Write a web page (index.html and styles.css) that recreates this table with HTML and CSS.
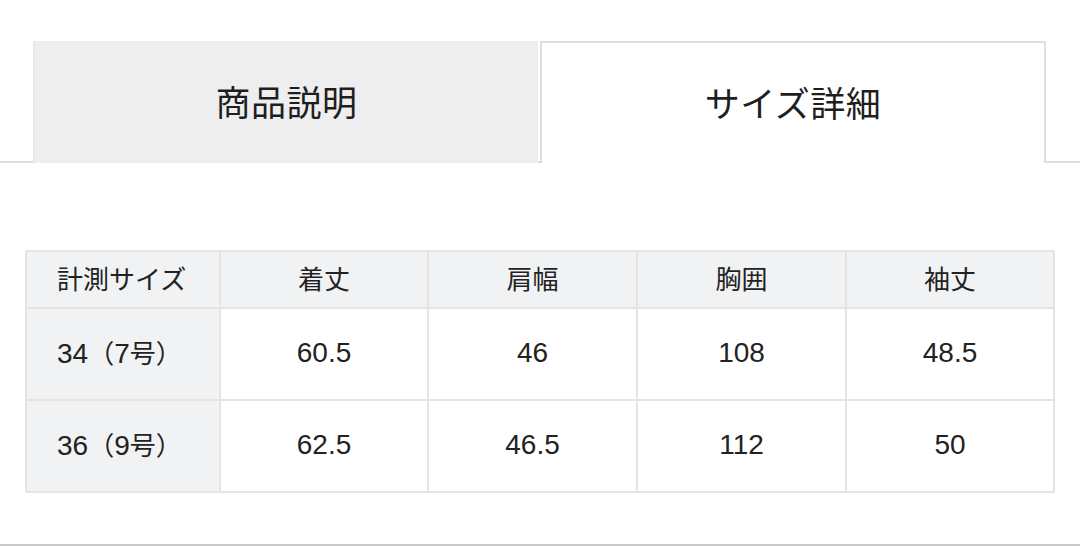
FILE: index.html
```html
<!DOCTYPE html>
<html lang="ja">
<head>
<meta charset="utf-8">
<title>サイズ詳細</title>
<link rel="stylesheet" href="styles.css">
</head>
<body>
<div class="page">
  <div class="tabs">
    <div class="tab">商品説明</div>
    <div class="tab tab-active">サイズ詳細</div>
  </div>
  <div class="table-wrap">
    <table class="size-table">
      <colgroup>
        <col class="c1">
        <col class="c2">
        <col class="c3">
        <col class="c4">
        <col class="c5">
      </colgroup>
      <thead>
        <tr class="head-row">
          <th class="label">計測サイズ</th>
          <th>着丈</th>
          <th>肩幅</th>
          <th>胸囲</th>
          <th>袖丈</th>
        </tr>
      </thead>
      <tbody>
        <tr class="data-row">
          <th class="label"><span class="num">34</span>（<span class="num">7</span>号）</th>
          <td>60.5</td>
          <td>46</td>
          <td>108</td>
          <td>48.5</td>
        </tr>
        <tr class="data-row">
          <th class="label"><span class="num">36</span>（<span class="num">9</span>号）</th>
          <td>62.5</td>
          <td>46.5</td>
          <td>112</td>
          <td>50</td>
        </tr>
      </tbody>
    </table>
  </div>
  <div class="rule"></div>
</div>
</body>
</html>
```

FILE: styles.css
```css
* { box-sizing: border-box; }
html, body {
  margin: 0;
  padding: 0;
  background: #ffffff;
}
body {
  font-family: "Noto Sans CJK JP", "Noto Sans", sans-serif;
  color: #222222;
  width: 1080px;
  height: 546px;
  overflow: hidden;
}
.page {
  padding-top: 41px;
}
.tabs {
  display: flex;
  gap: 2px;
  padding: 0 34px 0 33px;
  border-bottom: 2px solid #dedede;
  height: 122px;
}
.tab {
  flex: 0 0 505px;
  height: 122px;
  margin-bottom: -2px;
  padding-bottom: 4px;
  background: #eeeeee;
  border-left: 2px solid #e8e8e8;
  display: flex;
  align-items: center;
  justify-content: center;
  font-size: 35px;
  color: #1e1e1e;
  letter-spacing: 0.5px;
}
.tab-active {
  flex: 0 0 506px;
  background: #ffffff;
  border: 2px solid #dedede;
  border-bottom: none;
}
.table-wrap {
  padding: 87px 25px 0 25px;
}
.size-table {
  width: 1028px;
  table-layout: fixed;
  border-collapse: collapse;
  border: 2px solid #e4e4e4;
  font-size: 26px;
}
.c1 { width: 194px; }
.c2 { width: 208px; }
.c3 { width: 209px; }
.c4 { width: 209px; }
.c5 { width: 208px; }
.size-table th,
.size-table td {
  border: 2px solid #e4e4e4;
  text-align: center;
  font-weight: normal;
  padding: 0 0 5px 0;
  color: #222222;
  white-space: nowrap;
}
.size-table td {
  background: #ffffff;
  font-family: "Liberation Sans", "Noto Sans CJK JP", sans-serif;
  font-size: 28px;
  padding-bottom: 2px;
}
.num {
  font-family: "Liberation Sans", sans-serif;
  font-size: 28px;
}
.head-row { height: 57px; }
.head-row th { background: #f1f2f4; }
.data-row { height: 92px; }
.size-table th.label {
  text-align: left;
  padding-left: 30px;
  background: #f1f2f4;
}
.rule {
  margin-top: 51px;
  border-top: 2px solid #c9c9c9;
}
```
